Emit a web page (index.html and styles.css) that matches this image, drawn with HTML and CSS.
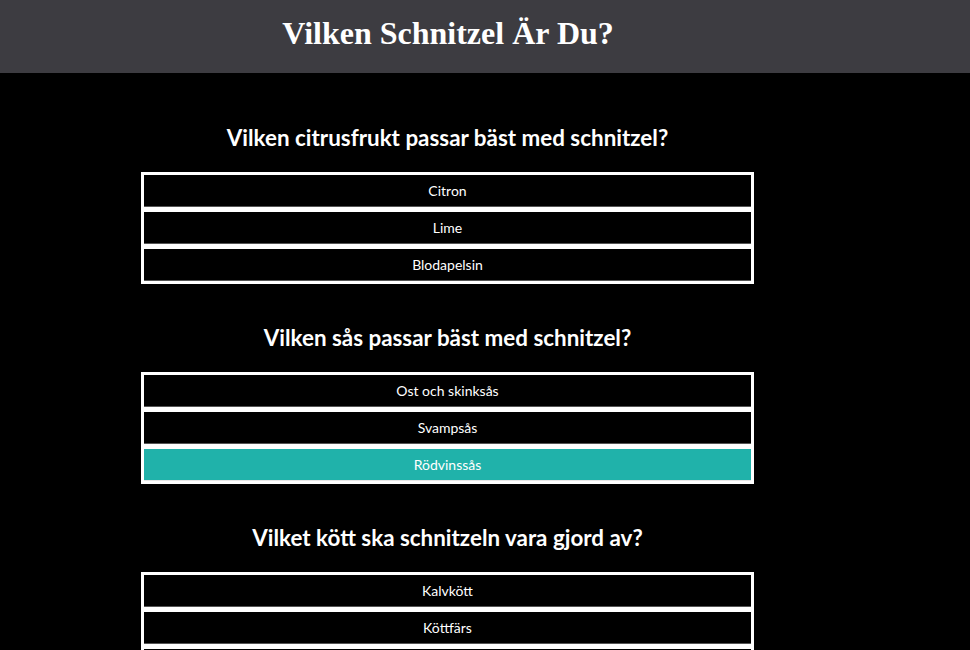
FILE: index.html
```html
<!DOCTYPE html>
<html lang="sv">
<head>
<meta charset="utf-8">
<title>Vilken Schnitzel Är Du?</title>
<link rel="stylesheet" href="styles.css">
</head>
<body>
<header class="topbar">
  <div class="topbar-inner"><h1 class="title">Vilken Schnitzel Är Du?</h1></div>
</header>
<main class="quiz">
  <section class="question">
    <h2 class="question-title">Vilken citrusfrukt passar bäst med schnitzel?</h2>
    <div class="options">
      <button class="option">Citron</button>
      <button class="option">Lime</button>
      <button class="option">Blodapelsin</button>
    </div>
  </section>
  <section class="question">
    <h2 class="question-title">Vilken sås passar bäst med schnitzel?</h2>
    <div class="options">
      <button class="option">Ost och skinksås</button>
      <button class="option">Svampsås</button>
      <button class="option selected">Rödvinssås</button>
    </div>
  </section>
  <section class="question">
    <h2 class="question-title">Vilket kött ska schnitzeln vara gjord av?</h2>
    <div class="options">
      <button class="option">Kalvkött</button>
      <button class="option">Köttfärs</button>
      <button class="option">Fläskkött</button>
    </div>
  </section>
</main>
</body>
</html>
```
FILE: styles.css
```css
html, body {
  margin: 0;
  padding: 0;
  background: #000;
  color: #fff;
}
.topbar {
  background: #3d3c41;
  height: 73px;
}
.topbar-inner {
  width: 896px;
}
.title {
  margin: 0;
  font-family: "Liberation Serif", "Times New Roman", serif;
  font-weight: bold;
  font-size: 32px;
  line-height: 66px;
  text-align: center;
  color: #fff;
}
.quiz {
  width: 895px;
  padding-top: 51px;
}
.question {
  display: flex;
  flex-direction: column;
  align-items: center;
  margin-bottom: 40px;
}
.question-title {
  margin: 0 0 20px 0;
  font-family: Lato, "Open Sans", sans-serif;
  font-weight: bold;
  font-size: 22.4px;
  line-height: 28px;
  text-align: center;
}
.options {
  width: 607px;
  background: #fff;
  padding: 3px;
  display: flex;
  flex-direction: column;
  gap: 5px;
}
.option {
  display: block;
  height: 32px;
  margin: 0;
  padding: 0;
  border: 0;
  border-bottom: 1px solid #555;
  background: #000;
  color: #fff;
  font-family: Lato, "Open Sans", sans-serif;
  font-size: 14px;
  text-align: center;
  cursor: pointer;
}
.option.selected {
  background: #20b2aa;
  border-bottom-color: #e6e6e6;
}
```
